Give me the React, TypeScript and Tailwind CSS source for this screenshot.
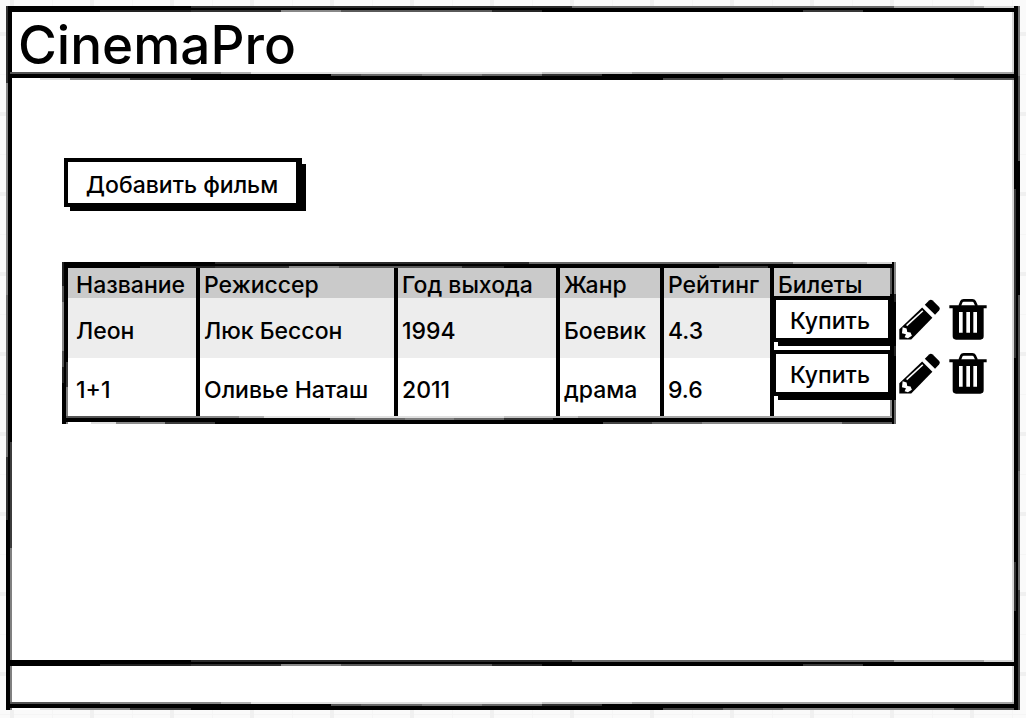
import type { ReactNode } from 'react';

type Film = {
  title: string;
  director: string;
  year: string;
  genre: string;
  rating: string;
};

const films: Film[] = [
  { title: 'Леон', director: 'Люк Бессон', year: '1994', genre: 'Боевик', rating: '4.3' },
  { title: '1+1', director: 'Оливье Наташ', year: '2011', genre: 'драма', rating: '9.6' },
];

const columns = ['Название', 'Режиссер', 'Год выхода', 'Жанр', 'Рейтинг', 'Билеты'];

/* Hand-drawn horizontal line that thins towards the right. */
function TopLine() {
  return (
    <div aria-hidden="true" className="relative -mx-0.5 flex h-[6px] flex-col bg-black">
      <div className="h-[2px] bg-[linear-gradient(to_right,#000_18%,#2b2b2b_18%_56%,#696969_56%_88%,#a8a8a8_88%_97%,#d5d5d5_97%)]" />
      <div className="h-[2px]" />
      <div className="h-[2px] bg-[linear-gradient(to_right,#000_9%,#222_9%_18%,#333_18%_27%,#888_27%_33%,#5a5a5a_33%_48%,#282828_48%_53%,#000_53%_79%,#383838_79%_85%,#000_85%)]" />
    </div>
  );
}

/* Hand-drawn horizontal line that sags in the middle. */
function BottomLine() {
  return (
    <div aria-hidden="true" className="relative -mx-0.5 flex h-[8px] flex-col">
      <div className="h-[2px] bg-[linear-gradient(to_right,#555_9%,#888_9%_21%,#b0b0b0_21%_24%,#e0e0e0_24%_53%,#c4c4c4_53%_62%,#a4a4a4_62%)]" />
      <div className="h-[2px] bg-[linear-gradient(to_right,#000_32%,#555_32%_35%,#686868_35%_41%,#808080_41%_47%,#666_47%_53%,#303030_53%_59%,#000_59%)]" />
      <div className="h-[2px] bg-black" />
      <div className="h-[2px] bg-[linear-gradient(to_right,transparent_3%,#ddd_3%_6%,#8c8c8c_6%_12%,#3c3c3c_12%_18%,#000_18%_65%,#444_65%_71%,#6a6a6a_71%_77%,#8a8a8a_77%_94%,#555_94%)]" />
    </div>
  );
}

function LeftLine() {
  return (
    <div aria-hidden="true" className="flex w-[6px] shrink-0 bg-black">
      <div className="w-[2px] bg-[linear-gradient(to_bottom,#333_11%,#888_11%_41%,#707070_41%_64%,#333_64%_73%,#000_73%)]" />
      <div className="w-[2px]" />
      <div className="w-[2px] bg-[linear-gradient(to_bottom,#000_62%,#3c3c3c_62%_77%,#808080_77%)]" />
    </div>
  );
}

function RightLine() {
  return (
    <div aria-hidden="true" className="flex w-[8px] shrink-0 bg-black">
      <div className="w-[2px] bg-[#d6d6d6]" />
      <div className="w-[2px] bg-[linear-gradient(to_bottom,#000_26%,#383838_26%_50%,#000_50%_79%,#333_79%_86%,#000_86%)]" />
      <div className="w-[2px]" />
      <div className="w-[2px] bg-[linear-gradient(to_bottom,#777_10%,#505050_10%_22%,#000_22%_41%,#505050_41%_66%,#707070_66%_83%,#444_83%)]" />
    </div>
  );
}

function SketchButton({ children, label, className }: { children: ReactNode; label?: string; className: string }) {
  return (
    <button
      type="button"
      aria-label={label}
      className={`relative border-4 border-black bg-white text-center shadow-[5px_5px_0_-1px_#000] ${className}`}
    >
      {children}
    </button>
  );
}

function PencilIcon() {
  return (
    <svg viewBox="27 29 124 123" className="h-[41px] w-[41px]" aria-hidden="true">
      <path d="M105 46 118 33Q123 28 129 33L147 51Q153 57 148 63L136 76Z" />
      <path d="M97 54 128 85 64 151H28V120Z" />
      <path d="M50 109 99 64" stroke="#fff" strokeWidth="5" fill="none" />
      <path d="M38 114 50 118 52 128 62 130 66 140 54 147 44 144 48 135 36 132Z" fill="#fff" />
    </svg>
  );
}

function TrashIcon() {
  return (
    <svg viewBox="177 29 114 123" className="h-[41px] w-[38px]" aria-hidden="true">
      <path d="M209 50 214 37Q216 33 221 33H247Q252 33 254 37L260 50" fill="none" stroke="#000" strokeWidth="8" />
      <path d="M178 48H290V57H281V141Q281 151 271 151H198Q188 151 188 141V57H178Z" />
      <path d="M207 68h11v62h-11zM229 68h11v62h-11zM250 68h11v62h-11z" fill="#fff" />
    </svg>
  );
}

const headCell =
  'h-[30px] border-r-4 border-black bg-[#cacaca] p-0 pt-1 pl-1 text-left align-middle leading-[26px] font-medium whitespace-nowrap first:pl-2 last:border-r-0';
const bodyCell = 'border-r-4 border-black p-0 pt-1.5 pl-1 align-middle whitespace-nowrap';

export default function App() {
  return (
    <div className="flex min-h-screen flex-col bg-[#fafafa] bg-[linear-gradient(to_right,#f0f0f0_4px,transparent_4px),linear-gradient(to_bottom,#f0f0f0_4px,transparent_4px),linear-gradient(to_right,#f5f5f5_1px,transparent_1px),linear-gradient(to_bottom,#f5f5f5_1px,transparent_1px)] bg-[size:80px_80px] bg-[position:10px_0,0_32px,52px_0,0_74px] p-1.5 pb-2 font-['Inter','Noto_Sans',sans-serif] text-[23px] leading-7 font-medium text-black">
      <div className="flex flex-1">
        <LeftLine />
        <div className="flex min-w-0 flex-1 flex-col bg-white">
          <TopLine />
          <header className="flex h-[60px] items-center pt-1.5 pl-1.5">
            <h1 className="text-[53px] leading-none font-medium">CinemaPro</h1>
          </header>
          <BottomLine />

          <main className="flex-1 pt-[78px] pr-[25px] pl-[50px]">
            <SketchButton className="ml-0.5 h-[49px] w-[238px] border-r-[6px] pt-1">Добавить фильм</SketchButton>

            <div className="mt-[55px] flex items-start gap-[3px]">
              <div className="flex min-w-0 flex-1">
                <div aria-hidden="true" className="flex w-[6px] shrink-0 bg-black">
                  <div className="w-[2px] bg-[linear-gradient(to_bottom,#222_15%,#555_15%_25%,#888_25%_55%,#555_55%_65%,#222_65%_75%,#000_75%)]" />
                  <div className="w-[2px]" />
                  <div className="w-[2px] bg-[linear-gradient(to_bottom,#000_62%,#3c3c3c_62%_77%,#808080_77%)]" />
                </div>
                <div className="min-w-0 flex-1">
                  <TopLine />
                  <table className="w-full table-fixed border-separate border-spacing-0">
                    <colgroup>
                      <col className="w-[132px]" />
                      <col className="w-[198px]" />
                      <col className="w-[162px]" />
                      <col className="w-[104px]" />
                      <col className="w-[110px]" />
                      <col className="w-[116px]" />
                    </colgroup>
                    <thead>
                      <tr>
                        {columns.map((column) => (
                          <th key={column} scope="col" className={headCell}>
                            {column}
                          </th>
                        ))}
                      </tr>
                    </thead>
                    <tbody>
                      {films.map((film, index) => (
                        <tr key={film.title} className="h-[60px] odd:bg-[#ededed] last:h-[58px]">
                          <td className={`${bodyCell} pl-2`}>{film.title}</td>
                          <td className={bodyCell}>{film.director}</td>
                          <td className={bodyCell}>{film.year}</td>
                          <td className={bodyCell}>{film.genre}</td>
                          <td className={bodyCell}>{film.rating}</td>
                          {index === 0 && (
                            <td rowSpan={films.length} className="bg-white p-0 align-top">
                              <div className="-mx-0.5 -mt-0.5 flex flex-col gap-2">
                                {films.map((item) => (
                                  <SketchButton
                                    key={item.title}
                                    label={`Купить: ${item.title}`}
                                    className="z-10 h-[46px] w-full pt-1 pr-1"
                                  >
                                    Купить
                                  </SketchButton>
                                ))}
                              </div>
                            </td>
                          )}
                        </tr>
                      ))}
                    </tbody>
                  </table>
                  <BottomLine />
                </div>
                <div aria-hidden="true" className="flex w-[6px] shrink-0 bg-black">
                  <div className="w-[2px] bg-[linear-gradient(to_bottom,#555_20%,#000_20%_85%,#888_85%)]" />
                  <div className="w-[2px]" />
                  <div className="w-[2px] bg-[linear-gradient(to_bottom,#888_20%,#222_20%_85%,#666_85%)]" />
                </div>
              </div>

              <ul className="flex shrink-0 flex-col gap-[13px] pt-[37px]">
                {films.map((film) => (
                  <li key={film.title} className="flex gap-[9px]">
                    <button type="button" aria-label={`Редактировать: ${film.title}`}>
                      <PencilIcon />
                    </button>
                    <button type="button" aria-label={`Удалить: ${film.title}`}>
                      <TrashIcon />
                    </button>
                  </li>
                ))}
              </ul>
            </div>
          </main>

          <TopLine />
          <footer className="h-[36px]" />
          <BottomLine />
        </div>
        <RightLine />
      </div>
    </div>
  );
}
